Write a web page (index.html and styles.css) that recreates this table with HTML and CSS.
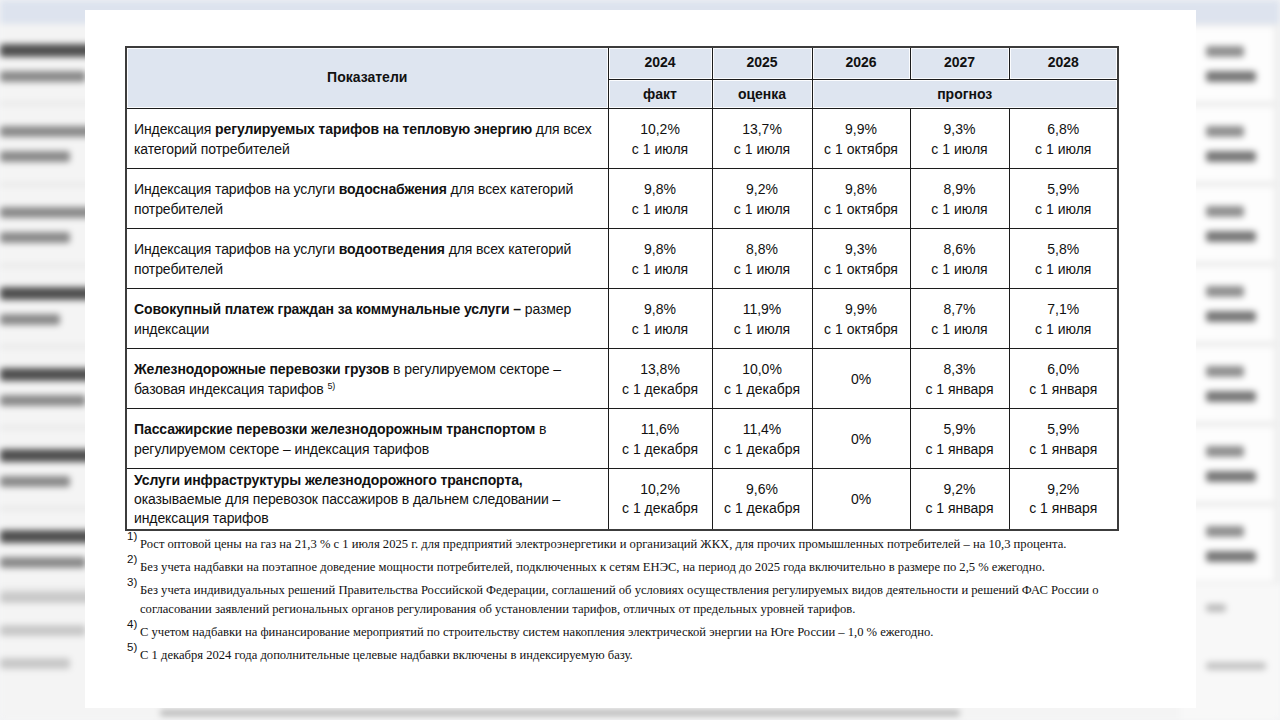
FILE: index.html
```html
<!DOCTYPE html>
<html lang="ru">
<head>
<meta charset="utf-8">
<title>Индексация тарифов</title>
<link rel="stylesheet" href="styles.css">
</head>
<body>
<div class="stage">
  <div class="backdrop" aria-hidden="true">
    <div class="bd-left">
      <div class="bd-head"></div>
      <div class="bd-row"><i class="dk w1"></i><i class="w2"></i></div>
      <div class="bd-row"><i class="w1"></i><i class="w3"></i></div>
      <div class="bd-row"><i class="w1"></i><i class="w3"></i></div>
      <div class="bd-row"><i class="dk w1"></i><i class="w4"></i></div>
      <div class="bd-row"><i class="dk w1"></i><i class="w2"></i></div>
      <div class="bd-row"><i class="dk w1"></i><i class="w3"></i></div>
      <div class="bd-row"><i class="dk w1"></i><i class="w2"></i></div>
      <div class="bd-row lt"><i class="w1"></i><i class="w2"></i><i class="w3"></i></div>
    </div>
    <div class="bd-mid">
      <div class="bd-head"></div>
      <div class="bd-foot"><i></i></div>
    </div>
    <div class="bd-right">
      <div class="bd-head"></div>
      <div class="bd-cell"><i class="s1"></i><i class="s2"></i></div>
      <div class="bd-cell"><i class="s1"></i><i class="s2"></i></div>
      <div class="bd-cell"><i class="s1"></i><i class="s2"></i></div>
      <div class="bd-cell"><i class="s1"></i><i class="s2"></i></div>
      <div class="bd-cell"><i class="s1"></i><i class="s2"></i></div>
      <div class="bd-cell"><i class="s1"></i><i class="s2"></i></div>
      <div class="bd-cell"><i class="s1"></i><i class="s2"></i></div>
      <div class="bd-tail"><i class="t1"></i><i class="t2"></i></div>
    </div>
  </div>

  <main class="card">
    <table class="tariffs">
      <colgroup>
        <col class="c-name">
        <col class="c-y24">
        <col class="c-y25">
        <col class="c-y26">
        <col class="c-y27">
        <col class="c-y28">
      </colgroup>
      <thead>
        <tr class="h-years">
          <th rowspan="2" class="h-name">Показатели</th>
          <th>2024</th>
          <th>2025</th>
          <th>2026</th>
          <th>2027</th>
          <th>2028</th>
        </tr>
        <tr class="h-kind">
          <th>факт</th>
          <th>оценка</th>
          <th colspan="3">прогноз</th>
        </tr>
      </thead>
      <tbody>
        <tr>
          <td class="name">Индексация <b>регулируемых тарифов на тепловую энергию</b> для всех<br>категорий потребителей</td>
          <td>10,2%<br>с 1 июля</td>
          <td>13,7%<br>с 1 июля</td>
          <td>9,9%<br>с 1 октября</td>
          <td>9,3%<br>с 1 июля</td>
          <td>6,8%<br>с 1 июля</td>
        </tr>
        <tr>
          <td class="name">Индексация тарифов на услуги <b>водоснабжения</b> для всех категорий<br>потребителей</td>
          <td>9,8%<br>с 1 июля</td>
          <td>9,2%<br>с 1 июля</td>
          <td>9,8%<br>с 1 октября</td>
          <td>8,9%<br>с 1 июля</td>
          <td>5,9%<br>с 1 июля</td>
        </tr>
        <tr>
          <td class="name">Индексация тарифов на услуги <b>водоотведения</b> для всех категорий<br>потребителей</td>
          <td>9,8%<br>с 1 июля</td>
          <td>8,8%<br>с 1 июля</td>
          <td>9,3%<br>с 1 октября</td>
          <td>8,6%<br>с 1 июля</td>
          <td>5,8%<br>с 1 июля</td>
        </tr>
        <tr>
          <td class="name"><b>Совокупный платеж граждан за коммунальные услуги –</b> размер<br>индексации</td>
          <td>9,8%<br>с 1 июля</td>
          <td>11,9%<br>с 1 июля</td>
          <td>9,9%<br>с 1 октября</td>
          <td>8,7%<br>с 1 июля</td>
          <td>7,1%<br>с 1 июля</td>
        </tr>
        <tr>
          <td class="name"><b>Железнодорожные перевозки грузов</b> в регулируемом секторе –<br>базовая индексация тарифов <sup class="ref">5)</sup></td>
          <td>13,8%<br>с 1 декабря</td>
          <td>10,0%<br>с 1 декабря</td>
          <td>0%</td>
          <td>8,3%<br>с 1 января</td>
          <td>6,0%<br>с 1 января</td>
        </tr>
        <tr>
          <td class="name"><b>Пассажирские перевозки железнодорожным транспортом</b> в<br>регулируемом секторе – индексация тарифов</td>
          <td>11,6%<br>с 1 декабря</td>
          <td>11,4%<br>с 1 декабря</td>
          <td>0%</td>
          <td>5,9%<br>с 1 января</td>
          <td>5,9%<br>с 1 января</td>
        </tr>
        <tr class="tall">
          <td class="name"><b>Услуги инфраструктуры железнодорожного транспорта,</b><br>оказываемые для перевозок пассажиров в дальнем следовании –<br>индексация тарифов</td>
          <td>10,2%<br>с 1 декабря</td>
          <td>9,6%<br>с 1 декабря</td>
          <td>0%</td>
          <td>9,2%<br>с 1 января</td>
          <td>9,2%<br>с 1 января</td>
        </tr>
      </tbody>
    </table>

    <div class="notes">
      <div class="note"><span class="mark">1)</span><p>Рост оптовой цены на газ на 21,3 % с 1 июля 2025 г. для предприятий электроэнергетики и организаций ЖКХ, для прочих промышленных потребителей – на 10,3 процента.</p></div>
      <div class="note"><span class="mark">2)</span><p>Без учета надбавки на поэтапное доведение мощности потребителей, подключенных к сетям ЕНЭС, на период до 2025 года включительно в размере по 2,5 % ежегодно.</p></div>
      <div class="note"><span class="mark">3)</span><p>Без учета индивидуальных решений Правительства Российской Федерации, соглашений об условиях осуществления регулируемых видов деятельности и решений ФАС России о<br>согласовании заявлений региональных органов регулирования об установлении тарифов, отличных от предельных уровней тарифов.</p></div>
      <div class="note"><span class="mark">4)</span><p>С учетом надбавки на финансирование мероприятий по строительству систем накопления электрической энергии на Юге России – 1,0 % ежегодно.</p></div>
      <div class="note"><span class="mark">5)</span><p>С 1 декабря 2024 года дополнительные целевые надбавки включены в индексируемую базу.</p></div>
    </div>
  </main>
</div>
</body>
</html>
```

FILE: styles.css
```css
html, body {
  margin: 0;
  padding: 0;
}

body {
  background: #f3f4f6;
  font-family: "Liberation Sans", Arial, sans-serif;
  color: #111;
}

.stage {
  display: grid;
  width: 1280px;
  height: 720px;
  overflow: hidden;
}

/* ---------- blurred backdrop (zoomed document behind the card) ---------- */
.backdrop {
  grid-area: 1 / 1;
  display: flex;
  background: #f7f7f8;
  filter: blur(3px);
  overflow: hidden;
}

.backdrop i {
  display: block;
  height: 11px;
  border-radius: 3px;
  background: #8a8a8a;
}

.bd-head {
  height: 24px;
  background: #dde3ee;
  flex: none;
}

.bd-left {
  width: 100px;
  display: flex;
  flex-direction: column;
  background: #f4f4f4;
}

.bd-row {
  height: 78px;
  display: flex;
  flex-direction: column;
  justify-content: center;
  gap: 14px;
  border-bottom: 3px solid #e4e4e4;
}

.bd-row .dk {
  background: #505050;
  height: 13px;
}

.bd-row .w1 { width: 96px; }
.bd-row .w2 { width: 86px; }
.bd-row .w3 { width: 70px; }
.bd-row .w4 { width: 60px; }

.bd-row.lt {
  border-bottom: none;
  gap: 22px;
}

.bd-row.lt i {
  background: #c8c8c8;
}

.bd-mid {
  flex: 1;
  display: flex;
  flex-direction: column;
  justify-content: space-between;
  background: #f4f4f4;
}

.bd-foot {
  height: 10px;
  padding-left: 60px;
}

.bd-foot i {
  width: 800px;
  height: 6px;
  background: #b5b5b5;
}

.bd-right {
  width: 100px;
  display: flex;
  flex-direction: column;
  background: #eeeeee;
}

.bd-cell {
  height: 74px;
  margin: 3px 6px 3px 0;
  background: #fdfdfd;
  display: flex;
  flex-direction: column;
  justify-content: center;
  gap: 14px;
  padding-left: 26px;
}

.bd-cell .s1 { width: 38px; background: #8f8f8f; }
.bd-cell .s2 { width: 50px; background: #777; }

.bd-tail {
  flex: 1;
  display: flex;
  flex-direction: column;
  gap: 50px;
  padding: 20px 0 0 26px;
  background: #f8f8f8;
}

.bd-tail .t1 { width: 20px; height: 8px; background: #bbb; }
.bd-tail .t2 { width: 60px; height: 8px; background: #c4c4c4; }

/* ---------- card ---------- */
.card {
  grid-area: 1 / 1;
  position: relative;
  z-index: 1;
  align-self: start;
  width: 1111px;
  margin: 10px 0 0 85px;
  height: 698px;
  box-sizing: border-box;
  padding: 36px 0 0 40px;
  background: #fff;
}

.tariffs {
  width: 993px;
  border-collapse: collapse;
  table-layout: fixed;
  border: 2px solid #3c3c3c;
  font-size: 14px;
  line-height: 20px;
  color: #111;
}

.c-name { width: 482px; }
.c-y24 { width: 104px; }
.c-y25 { width: 100px; }
.c-y26 { width: 98px; }
.c-y27 { width: 99px; }
.c-y28 { width: 109px; }

.tariffs th,
.tariffs td {
  border: 1px solid #1c1c1c;
  padding: 0 4px;
  text-align: center;
  vertical-align: middle;
}

.tariffs th {
  background: #dee5f0;
  font-weight: bold;
  box-shadow: inset 0 0 0 1px #fbfcfe;
}

.h-years th {
  height: 28px;
  padding-bottom: 3px;
}

.h-kind th {
  height: 28px;
}

.tariffs tbody td {
  height: 59px;
}

.tariffs td.name {
  text-align: left;
  padding: 0 7px;
  letter-spacing: -0.1px;
}

.tariffs .tall td {
  height: 60px;
  line-height: 19px;
}

.ref {
  font-size: 9px;
  line-height: 0;
  vertical-align: 5px;
}

/* ---------- footnotes ---------- */
.notes {
  display: flex;
  flex-direction: column;
  font-family: "Liberation Serif", "Times New Roman", serif;
  font-size: 12.6px;
  color: #111;
}

.note {
  display: flex;
  align-items: flex-start;
  padding-top: 4px;
  line-height: 19px;
}

.mark {
  flex: none;
  width: 15px;
  padding-left: 2px;
  box-sizing: border-box;
  font-family: "Liberation Sans", Arial, sans-serif;
  font-size: 11.5px;
  line-height: 11px;
  margin-top: -4px;
}

.note p {
  margin: 0;
}
```
